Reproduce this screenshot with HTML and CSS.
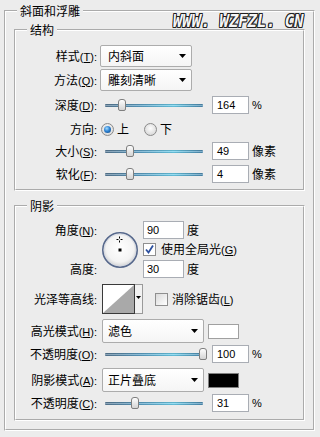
FILE: index.html
```html
<!DOCTYPE html>
<html lang="zh-CN">
<head>
<meta charset="utf-8">
<title>斜面和浮雕</title>
<link rel="stylesheet" href="styles.css">
</head>
<body>
<fieldset class="group outer">
  <legend>斜面和浮雕</legend>

  <fieldset class="group inner struct">
    <legend>结构</legend>
    <div class="row">
      <span class="lbl">样式<span class="mn">(<u>T</u>):</span></span>
      <div class="combo c-struct"><span>内斜面</span><i class="arrow"></i></div>
    </div>
    <div class="row mt2">
      <span class="lbl">方法<span class="mn">(<u>Q</u>):</span></span>
      <div class="combo c-struct"><span>雕刻清晰</span><i class="arrow"></i></div>
    </div>
    <div class="row mt3">
      <span class="lbl">深度<span class="mn">(<u>D</u>):</span></span>
      <div class="slider"><div class="track"></div><div class="thumb" style="left:17%"></div></div>
      <div class="num">164</div><span class="unit mn">%</span>
    </div>
    <div class="row mt2">
      <span class="lbl">方向<span class="mn">:</span></span>
      <span class="radio on r-up"></span><span class="opt">上</span>
      <span class="radio r-down"></span><span class="opt">下</span>
    </div>
    <div class="row">
      <span class="lbl">大小<span class="mn">(<u>S</u>):</span></span>
      <div class="slider"><div class="track"></div><div class="thumb" style="left:25%"></div></div>
      <div class="num">49</div><span class="unit">像素</span>
    </div>
    <div class="row mt1">
      <span class="lbl">软化<span class="mn">(<u>F</u>):</span></span>
      <div class="slider"><div class="track"></div><div class="thumb" style="left:26%"></div></div>
      <div class="num">4</div><span class="unit">像素</span>
    </div>
  </fieldset>

  <fieldset class="group inner shadow">
    <legend>阴影</legend>
    <div class="angle">
      <span class="lbl g-a">角度<span class="mn">(<u>N</u>):</span></span>
      <svg class="dial" width="38" height="38" viewBox="0 0 38 38">
        <defs>
          <radialGradient id="dg" cx="50%" cy="45%" r="55%">
            <stop offset="0" stop-color="#ffffff"/>
            <stop offset="0.72" stop-color="#f3f3f3"/>
            <stop offset="1" stop-color="#cfcfcf"/>
          </radialGradient>
        </defs>
        <circle cx="19" cy="19" r="17.2" fill="url(#dg)" stroke="#56688c" stroke-width="1.6"/>
        <circle cx="19" cy="19" r="15.9" fill="none" stroke="#d3d8e2" stroke-width="0.8"/>
        <path d="M18.5 5.5v2M18.5 9.5v2M15.5 8.5h2M19.5 8.5h2" stroke="#000" stroke-width="1"/>
        <rect x="17.5" y="17.5" width="3" height="3" fill="#000"/>
      </svg>
      <div class="field g-ac"><div class="num wide">90</div><span class="unit">度</span></div>
      <div class="check g-bc"><span class="cb"><svg width="11" height="11" viewBox="0 0 11 11"><path d="M2 5.5 L4.5 8.5 L9 1.5" fill="none" stroke="#2b4f9e" stroke-width="1.8"/></svg></span><span>使用全局光<span class="mn">(<u>G</u>)</span></span></div>
      <span class="lbl g-c">高度<span class="mn">:</span></span>
      <div class="field g-cc"><div class="num wide">30</div><span class="unit">度</span></div>
    </div>
    <div class="row contour-row">
      <span class="lbl">光泽等高线<span class="mn">:</span></span>
      <svg class="contour" width="41" height="30" viewBox="0 0 41 30">
        <rect x="32.5" y="0.5" width="8" height="29" fill="#f2f2f2" stroke="#9a9a9a"/>
        <rect x="0.5" y="0.5" width="32" height="29" fill="#ffffff" stroke="#3a3a3a"/>
        <polygon points="1,29 32,1 32,29" fill="#a9a9a9"/>
        <polygon points="34,12 39,12 36.5,15" fill="#000"/>
      </svg>
      <div class="check aa"><span class="cb"></span><span>消除锯齿<span class="mn">(<u>L</u>)</span></span></div>
    </div>
    <div class="row tall mt5">
      <span class="lbl">高光模式<span class="mn">(<u>H</u>):</span></span>
      <div class="combo c-shadow"><span>滤色</span><i class="arrow"></i></div>
      <span class="swatch"></span>
    </div>
    <div class="row short mt1">
      <span class="lbl">不透明度<span class="mn">(<u>O</u>):</span></span>
      <div class="slider"><div class="track"></div><div class="thumb" style="left:100%"></div></div>
      <div class="num">100</div><span class="unit mn">%</span>
    </div>
    <div class="row tall mt4">
      <span class="lbl">阴影模式<span class="mn">(<u>A</u>):</span></span>
      <div class="combo c-shadow"><span>正片叠底</span><i class="arrow"></i></div>
      <span class="swatch black"></span>
    </div>
    <div class="row short mt1">
      <span class="lbl">不透明度<span class="mn">(<u>C</u>):</span></span>
      <div class="slider"><div class="track"></div><div class="thumb" style="left:31%"></div></div>
      <div class="num">31</div><span class="unit mn">%</span>
    </div>
  </fieldset>
</fieldset>

<div class="wm">WWW. WZFZL. CN</div>
</body>
</html>
```

FILE: styles.css
```css
* { box-sizing: border-box; }
html, body { margin: 0; }
body {
  width: 320px;
  height: 437px;
  overflow: hidden;
  position: relative;
  background: #ececec;
  padding-top: 4px;
  font-family: "Noto Sans CJK SC", "Microsoft YaHei", sans-serif;
  font-size: 12px;
  line-height: 14px;
  color: #000;
}

/* group boxes */
.group {
  margin: 0;
  padding: 0;
  border: 2px groove #ffffff;
  min-width: 0;
}
.group > legend {
  margin-left: 11px;
  padding: 0 3px;
  height: 14px;
  line-height: 14px;
}
.outer { margin: 0 5px 0 4px; }
.inner { margin-left: 8px; margin-right: 8px; }
.struct { margin-top: 5px; padding: 8px 0 4px; }
.shadow { margin-top: 8px; margin-bottom: 8px; padding: 7px 0 6px; }

/* rows */
.row { display: flex; align-items: center; height: 22px; }
.row.tall { height: 24px; }
.row.short { height: 20px; }
.mt1 { margin-top: 1px; }
.mt2 { margin-top: 2px; }
.mt3 { margin-top: 3px; }
.mt4 { margin-top: 4px; }
.mt5 { margin-top: 5px; }

.lbl { width: 81px; flex: none; text-align: right; white-space: nowrap; }
.mn { font-family: "Liberation Sans", Arial, sans-serif; font-size: 11px; }
.mn u { text-underline-offset: 1px; }

/* combo boxes */
.combo {
  display: flex;
  align-items: center;
  justify-content: space-between;
  flex: none;
  height: 22px;
  border: 1px solid #acacac;
  border-radius: 2px;
  background: linear-gradient(#ffffff, #f5f5f5);
  padding: 0 5px 0 7px;
}
.c-struct { width: 92px; margin-left: 3px; }
.c-shadow { width: 102px; height: 24px; margin-left: 5px; padding-left: 5px; }
.arrow {
  width: 7px;
  height: 4px;
  background: #000;
  clip-path: polygon(0 0, 100% 0, 50% 100%);
}

/* sliders */
.slider { position: relative; flex: none; width: 98px; height: 12px; margin-left: 8px; }
.track {
  height: 3px;
  margin-top: 5px;
  border-radius: 1px;
  background:
    linear-gradient(to bottom, rgba(0,0,0,0.2) 0, rgba(255,255,255,0.4) 50%, rgba(0,0,0,0.15) 100%),
    linear-gradient(to right, #3e6585 0%, #3f8fbb 35%, #52c6e8 70%, #2f78a6 100%);
}
.thumb {
  position: absolute;
  top: 0;
  width: 8px;
  height: 12px;
  margin-left: -4px;
  border: 1px solid #7f7f7f;
  border-radius: 3px 3px 2px 2px;
  background: linear-gradient(#fdfdfd, #d4d4d4);
}

/* number fields */
.num {
  flex: none;
  width: 37px;
  height: 18px;
  margin-left: 9px;
  border: 1px solid #a9adb4;
  background: #fff;
  font-family: "Liberation Sans", Arial, sans-serif;
  font-size: 11px;
  line-height: 16px;
  padding-left: 4px;
}
.num.wide { width: 41px; margin-left: 0; padding-left: 3px; }
.unit { margin-left: 3px; }

/* radio */
.radio {
  flex: none;
  width: 13px;
  height: 13px;
  border-radius: 50%;
  border: 1px solid #8a8a8a;
  background: radial-gradient(circle at 50% 40%, #fdfdfd, #d6d6d6 85%);
  display: flex;
  align-items: center;
  justify-content: center;
}
.radio.on::after {
  content: "";
  width: 7px;
  height: 7px;
  border-radius: 50%;
  background: radial-gradient(circle at 40% 35%, #a4dcff 0, #2f84d4 45%, #0b3f7a 100%);
}
.r-up { margin-left: 4px; }
.r-down { margin-left: 15px; }
.opt { margin-left: 3px; }

/* angle block */
.angle {
  display: grid;
  grid-template-columns: 81px 46px 1fr;
  grid-template-rows: 20px 19px 20px;
  align-items: center;
}
.g-a { grid-column: 1; grid-row: 1; }
.dial { grid-column: 2; grid-row: 1 / 4; margin-left: 4px; }
.g-ac { grid-column: 3; grid-row: 1; }
.g-bc { grid-column: 3; grid-row: 2; }
.g-c { grid-column: 1; grid-row: 3; }
.g-cc { grid-column: 3; grid-row: 3; }
.field { display: flex; align-items: center; }

/* checkboxes */
.check { display: flex; align-items: center; white-space: nowrap; }
.cb {
  flex: none;
  width: 13px;
  height: 13px;
  margin-right: 5px;
  border: 1px solid #8f8f8f;
  background: linear-gradient(135deg, #dadada, #ffffff);
  display: flex;
  align-items: center;
  justify-content: center;
}
.g-bc .cb { background: #fff; }

.contour-row { height: 30px; margin-top: 5px; }
.contour { flex: none; margin-left: 5px; }
.check.aa { margin-left: 12px; }
.check.aa .cb { margin-right: 4px; }

/* swatches */
.swatch {
  flex: none;
  width: 31px;
  height: 15px;
  margin-left: 4px;
  border: 1px solid #a0a0a0;
  background: #fff;
}
.swatch.black { background: #000; border-color: #808080; }

/* watermark */
.wm {
  position: absolute;
  left: 173px;
  top: 12px;
  font-family: "DejaVu Sans Mono", monospace;
  font-weight: bold;
  font-style: italic;
  font-size: 18px;
  line-height: 18px;
  white-space: pre;
  color: #f6f6f6;
  transform: scaleX(0.86);
  transform-origin: 0 0;
  text-shadow:
    -1px -1px 0 #222, 0 -1px 0 #222, 1px -1px 0 #222,
    -1px 0 0 #222, 1px 0 0 #222,
    -1px 1px 0 #222, 0 1px 0 #222, 1px 1px 0 #222;
}
```
